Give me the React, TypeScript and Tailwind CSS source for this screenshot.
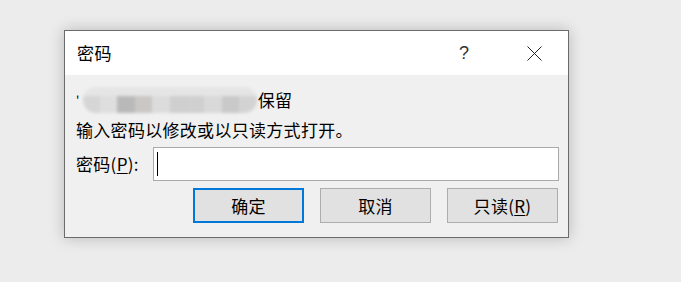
const font = { fontFamily: '"Noto Sans CJK SC", "Noto Sans", sans-serif' };

function Blurred() {
  // pixelated + blurred file name, as in the screenshot
  const blocks = ["#d6d6d6", "#dedede", "#b9b9b9", "#c9c8c6", "#dcdcdc", "#cfcfcf", "#d0d0d0", "#d9d9d9", "#c9c9c9", "#d3d3d3"];
  return (
    <span className="relative inline-flex h-[26px] w-[174px] flex-col overflow-hidden rounded-[13px] align-middle blur-[1.5px]">
      <span className="h-[9px] w-full bg-[#e5e5e5]" />
      <span className="flex flex-1">
        {blocks.map((c, i) => (
          <span key={i} className="h-full flex-1" style={{ backgroundColor: c }} />
        ))}
      </span>
    </span>
  );
}

function Btn({ children, primary }: { children: React.ReactNode; primary?: boolean }) {
  return (
    <button
      className={
        "flex h-[35px] w-[111px] items-center justify-center bg-[#e1e1e1] text-[17px] tracking-[0.3px] text-black " +
        (primary ? "border-2 border-[#0078d7]" : "border border-[#adadad]")
      }
      style={font}
    >
      {children}
    </button>
  );
}

export default function App() {
  return (
    <div className="h-[282px] w-[681px] bg-[#ececec] pl-[64px] pt-[30px]" style={font}>
      <div className="flex h-[208px] w-[505px] flex-col border border-[#6b6b6b] bg-[#f0f0f0] shadow-[0_0_14px_rgba(0,0,0,0.22)]">
        {/* Title bar */}
        <div className="flex h-[44px] items-center bg-white pl-[12px]">
          <span className="flex-1 text-[17px] leading-[24px] tracking-[0.4px] text-black">密码</span>
          <span className="mr-[58px] text-[18px] leading-none text-[#333]" style={{ fontFamily: '"Liberation Sans", sans-serif' }}>
            ?
          </span>
          <svg width="15" height="15" viewBox="0 0 15 15" className="mr-[26px]">
            <path d="M0.5 0.5 L14.5 14.5 M14.5 0.5 L0.5 14.5" stroke="#222" strokeWidth="1" fill="none" />
          </svg>
        </div>

        {/* Body */}
        <div className="flex flex-1 flex-col pl-[11px] pr-[9px] pt-[10px] text-[17px] tracking-[0.3px] text-black">
          <div className="flex h-[30px] items-center">
            <span className="mr-[3px] text-[12px] leading-none">'</span>
            <Blurred />
            <span className="ml-px leading-[24px]">保留</span>
          </div>
          <div className="h-[30px] leading-[30px]">输入密码以修改或以只读方式打开。</div>

          <div className="mt-[2px] flex items-center">
            <span className="w-[77px] leading-[24px]">
              密码(<span className="underline underline-offset-2">P</span>):
            </span>
            <div className="flex h-[34px] flex-1 items-center border border-[#a9a9a9] bg-white pl-[3px]">
              <span className="h-[24px] w-px bg-black" />
            </div>
          </div>

          <div className="mt-[7px] flex justify-end gap-[16px] pr-[1px]">
            <Btn primary>确定</Btn>
            <Btn>取消</Btn>
            <Btn>
              只读(<span className="underline underline-offset-2">R</span>)
            </Btn>
          </div>
        </div>
      </div>
    </div>
  );
}
